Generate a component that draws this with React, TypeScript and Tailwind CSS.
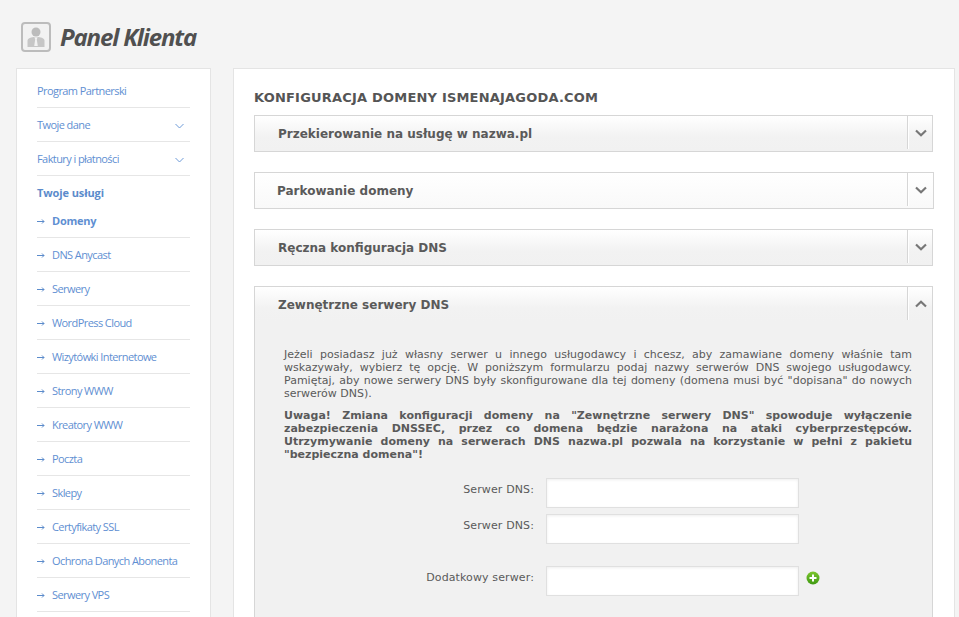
import React from "react";

const services = ["Domeny", "DNS Anycast", "Serwery", "WordPress Cloud", "Wizytówki Internetowe", "Strony WWW", "Kreatory WWW", "Poczta", "Sklepy", "Certyfikaty SSL", "Ochrona Danych Abonenta", "Serwery VPS"];

function Arrow() {
  return (
    <svg width="8" height="7" viewBox="0 0 8 7" className="shrink-0 mr-[7px]" fill="none">
      <path d="M0 3.5H7M5 1.5L7 3.5L5 5.5" stroke="#5b8bcb" strokeWidth="1" />
    </svg>
  );
}

function SmallChevron() {
  return (
    <svg width="9" height="6" viewBox="0 0 9 6" fill="none" className="mr-[6px]">
      <path d="M0.5 1L4.5 5L8.5 1" stroke="#6f9bd8" strokeWidth="1" />
    </svg>
  );
}

function Chevron({ up }: { up?: boolean }) {
  return (
    <svg width="12" height="8" viewBox="0 0 12 8" fill="none">
      <path d={up ? "M1 6.5L6 1.8L11 6.5" : "M1 1.5L6 6.2L11 1.5"} stroke="#777777" strokeWidth="2.2" />
    </svg>
  );
}

function Bar({ title, up, light, inset }: { title: string; up?: boolean; light?: boolean; inset?: boolean }) {
  return (
    <div className={`flex h-[35px] items-stretch bg-gradient-to-b ${light ? "from-white to-[#f9f9f9]" : "from-white via-[#f2f2f2] via-60% to-[#f1f1f1]"}`}>
      <div className={`flex-1 flex items-center text-[12px] font-bold text-[#5a5a5a] ${inset ? "pl-[22px]" : "pl-[23px]"}`}>{title}</div>
      <div className={`${inset ? "w-[26px]" : "w-[25px]"} pl-[7px] flex items-center border-l border-[#d6d6d6] shadow-[inset_1px_0_0_#ffffff] mb-[2px]`}>
        <Chevron up={up} />
      </div>
    </div>
  );
}

export default function App() {
  return (
    <div className="h-[617px] w-[959px] overflow-hidden bg-[#f4f4f4] font-['Open_Sans',sans-serif]">
      <header className="flex h-[68px] items-start pl-[21px] pt-[22px]">
        <svg width="30" height="30" viewBox="0 0 30 30" fill="none">
          <rect x="1" y="1" width="28" height="28" rx="3" fill="#f2f2f2" stroke="#bcbcbc" strokeWidth="2" />
          <circle cx="15" cy="10" r="4.5" fill="#bcbcbc" />
          <path d="M6.5 25V18.5C6.5 16.5 9 15.5 12.5 15L15 15.5L17.5 15C21 15.5 23.5 16.5 23.5 18.5V25Z" fill="#c6c6c6" />
          <path d="M13.5 15.5H16.5L15.8 17.5L16.8 24H13.2L14.2 17.5Z" fill="#f2f2f2" />
        </svg>
        <span className="ml-[9px] mt-[1px] text-[24px] leading-[28px] font-bold italic tracking-[-1.15px] text-[#505050]">Panel Klienta</span>
      </header>
      <div className="flex items-start pl-[16px]">
        <aside className="w-[195px] h-[600px] shrink-0 bg-white border border-[#e4e4e4] px-[20px] text-[11px] tracking-[-0.58px] text-[#5f8fd2]">
          <div className="h-[39px] pt-[13px] leading-[18px] border-b border-[#e6e6e6]">Program Partnerski</div>
          <div className="h-[34px] pt-[2px] flex items-center justify-between border-b border-[#e6e6e6]">Twoje dane<SmallChevron /></div>
          <div className="h-[34px] pt-[2px] flex items-center justify-between border-b border-[#e6e6e6]">Faktury i płatności<SmallChevron /></div>
          <div className="h-[28px] flex items-end pb-[3px] font-bold tracking-[-0.1px] text-[#5b8bcb]">Twoje usługi</div>
          {services.map((s, i) => (
            <div key={s} className={`h-[34px] pt-[2px] flex items-center border-b border-[#e6e6e6] ${i === 0 ? "font-bold tracking-[-0.25px]" : ""}`}>
              <Arrow />
              {s}
            </div>
          ))}
        </aside>
        <main className="ml-[22px] w-[722px] h-[600px] shrink-0 bg-white border border-[#e4e4e4] pl-[20px] font-['DejaVu_Sans',sans-serif]">
          <h1 className="mt-[21px] h-[25px] text-[13px] tracking-[0.2px] font-bold leading-[16px] text-[#555555]">KONFIGURACJA DOMENY ISMENAJAGODA.COM</h1>
          <div className="w-[679px] border border-[#d6d6d6]"><Bar title="Przekierowanie na usługę w nazwa.pl" /></div>
          <div className="w-[680px] mt-[20px] border border-[#d6d6d6]"><Bar title="Parkowanie domeny" inset light /></div>
          <div className="w-[679px] mt-[20px] border border-[#d6d6d6]"><Bar title="Ręczna konfiguracja DNS" /></div>
          <div className="w-[679px] mt-[20px] border border-[#d6d6d6] bg-[#f1f1f1] h-[400px]">
            <Bar title="Zewnętrzne serwery DNS" up />
            <div className="pl-[29px] pr-[20px] pt-[26px] text-[11px] leading-[13px] text-[#5a5a5a] text-justify">
              <p>Jeżeli posiadasz już własny serwer u innego usługodawcy i chcesz, aby zamawiane domeny właśnie tam wskazywały, wybierz tę opcję. W poniższym formularzu podaj nazwy serwerów DNS swojego usługodawcy. Pamiętaj, aby nowe serwery DNS były skonfigurowane dla tej domeny (domena musi być "dopisana" do nowych serwerów DNS).</p>
              <p className="mt-[9px] font-bold">Uwaga! Zmiana konfiguracji domeny na "Zewnętrzne serwery DNS" spowoduje wyłączenie zabezpieczenia DNSSEC, przez co domena będzie narażona na ataki cyberprzestępców. Utrzymywanie domeny na serwerach DNS nazwa.pl pozwala na korzystanie w pełni z pakietu "bezpieczna domena"!</p>
            </div>
            <div className="mt-[17px] flex flex-col text-[11px] tracking-[0.12px] text-[#5a5a5a]">
              <div className="flex items-start h-[30px]">
                <label className="w-[279px] text-right mt-[4px]">Serwer DNS:</label>
                <input className="ml-[12px] w-[253px] h-[30px] bg-white border border-[#e0e0e0] shadow-[inset_0_1px_3px_#eeeeee]" />
              </div>
              <div className="flex items-start h-[30px] mt-[6px]">
                <label className="w-[279px] text-right mt-[4px]">Serwer DNS:</label>
                <input className="ml-[12px] w-[253px] h-[30px] bg-white border border-[#e0e0e0] shadow-[inset_0_1px_3px_#eeeeee]" />
              </div>
              <div className="flex items-start h-[30px] mt-[22px]">
                <label className="w-[279px] text-right mt-[4px]">Dodatkowy serwer:</label>
                <input className="ml-[12px] w-[253px] h-[30px] bg-white border border-[#e0e0e0] shadow-[inset_0_1px_3px_#eeeeee]" />
                <svg width="14" height="14" viewBox="0 0 14 14" className="ml-[7px] mt-[5px]">
                  <defs>
                    <linearGradient id="g" x1="0" y1="0" x2="0" y2="1">
                      <stop offset="0" stopColor="#7cc52e" />
                      <stop offset="1" stopColor="#3f9a12" />
                    </linearGradient>
                  </defs>
                  <circle cx="7" cy="7" r="6.5" fill="url(#g)" />
                  <path d="M7 3.5V10.5M3.5 7H10.5" stroke="#fff" strokeWidth="2" />
                </svg>
              </div>
            </div>
          </div>
        </main>
      </div>
    </div>
  );
}
